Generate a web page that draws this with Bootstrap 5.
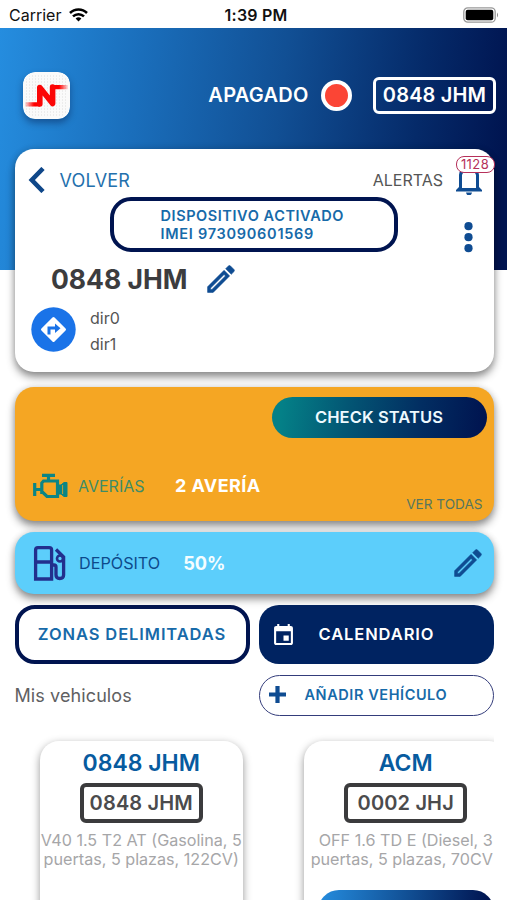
<!DOCTYPE html>
<html lang="es">
<head>
<meta charset="utf-8">
<meta name="viewport" content="width=device-width, initial-scale=1">
<title>Vehículo 0848 JHM</title>
<link href="https://cdn.jsdelivr.net/npm/bootstrap@5.3.0/dist/css/bootstrap.min.css" rel="stylesheet">
<style>
:root{--navy:#001450}
body{font-family:Inter,"Liberation Sans",sans-serif;width:507px;height:900px;overflow:hidden;background:#fff;line-height:1;color:#555}
svg{display:block;flex:none}
.t{white-space:nowrap;display:block}
.statusbar{height:28px;color:#111;font-size:16px;padding:2px 8px 0 9px}
.statusbar>div{flex:1 1 0}
.clock{letter-spacing:.2px;padding-left:4px}
.screen{height:872px;padding:0 13.5px 0 14.5px;background:linear-gradient(97deg,#258ddf 0,#1a6ebb 27%,#114f94 54%,#052a69 80%,#001450 97%) no-repeat 0 0/507px 242px}
.topbar{height:121px;padding:13px 0 0 8.5px;margin-right:-2.5px;color:#fff}
.applogo{width:47px;height:47px;box-shadow:0 4px 7px rgba(0,0,40,.35);border-radius:12px}
.power{font-size:20px;letter-spacing:.25px}
.led{width:31px;height:31px;border:4px solid #fff;background:#fb4535;border-radius:50%;margin-left:12.5px}
.plate{width:123px;height:37px;border:3px solid currentColor;border-radius:6px;font-size:20px;font-weight:600;letter-spacing:.15px}
.topbar .plate{margin-left:21px}
.shade{box-shadow:0 5px 8px rgba(0,0,0,.43),0 0 7px rgba(0,0,0,.13)}
.panel{border:0;border-radius:19px}
.device{height:222.5px}
.r1{height:48px;padding:14px 10.5px 0 13px}
.r2{height:55px}
.r3{height:54px;padding-left:36.5px}
.r4{height:46px;padding-left:16px}
.back{font-size:18px;color:#2470ad;margin-left:15px;letter-spacing:.2px;padding-top:1px}
.imei{width:288px;height:55px;border:4px solid var(--navy);border-radius:21px;color:#176aa9;font-size:14.5px;font-weight:600;line-height:17.5px;padding-left:46.5px;margin-left:95.5px;letter-spacing:.57px}
.dots{margin:25px 20.5px 0 auto}
.title{font-size:26.5px;color:#3c3c3e}
.dirs{font-size:16px;line-height:26.5px;margin-left:14.5px;padding-top:4px}
.alertcount{position:absolute;right:-11.5px;top:-9.5px;width:39px;height:17px;border:1.5px solid #b6305a;border-radius:8px;background:#fff;color:#b6305a;font-size:13px;line-height:14.5px;text-align:center;letter-spacing:.4px}
.faults{height:134px;margin-top:15.5px;background:#f5a623;padding:10px 7px 0 18.5px}
.check{width:215px;height:41px;border-radius:21px;background:linear-gradient(97deg,#048087 5%,#035674 35%,#022e62 68%,#001450 98%);color:#eefaff;font-size:16.5px;font-weight:600;letter-spacing:.1px}
.faultrow{margin-top:33.5px;height:28px}
.faultlabel{font-size:16px;color:#3d8c68;margin-left:10px}
.faultvalue{font-size:18px;margin-left:30.5px;letter-spacing:.4px}
.all{font-size:13.6px;color:#56765f;margin:-3px 4px 0 0;line-height:14px}
.tank{height:62px;margin-top:11px;background:#5ccefb;padding:0 12px 0 18.5px}
.tanklabel{font-size:16.2px;color:#0d4a8c;margin-left:13px;padding-top:1px}
.tankvalue{font-size:18.2px;color:#f4fdff;margin-left:23px;padding-top:1px}
.actions{margin-top:10.5px;gap:9px}
.bigbtn{width:235px;height:59.5px;border-radius:20px;font-weight:600;font-size:16.5px;letter-spacing:.9px}
.zones{border:4px solid var(--navy);color:#176aa9}
.cal{background:#002361;color:#fff;padding-left:15px}
.mine{height:42px;margin-top:10px}
.minelabel{font-size:18px;color:#606062;letter-spacing:.1px;padding-top:2px}
.add{width:235px;height:41px;border:1.5px solid #343d7b;border-radius:21px;color:#176aa9;font-weight:600;font-size:14.5px;padding-left:9px;letter-spacing:.57px}
.strip{margin:10px 0 0 -14.5px;padding:15px 0 0 39.5px;height:185px;overflow:hidden;gap:61px}
.vehicle{width:203.5px;height:220px;flex:none;border-radius:19px;text-align:center;box-shadow:0 3px 8px rgba(0,0,0,.42)}
.vname{color:#075b9f;font-size:23px;font-weight:600;line-height:24px;margin-top:10px}
.vehicle .plate{height:40px;border-width:4px;color:#3b3b3d;margin-top:7.5px}
.vehicle .plate .t{color:#4b4b4d;padding-top:1px}
.desc{color:#a6a6a8;font-size:16.15px;line-height:19px;margin-top:8px}
.go{width:176px;height:42px;border-radius:21px;background:linear-gradient(97deg,#258ddf,#114f94 50%,#001450 95%);margin-top:21.5px}
</style>
<script src="https://cdn.jsdelivr.net/npm/bootstrap@5.3.0/dist/js/bootstrap.bundle.min.js"></script>
</head>
<body>
<svg width="0" height="0" class="position-absolute"><defs>
<symbol id="pencil" viewBox="2.600 2.600 18.800 18.800"><path d="M14.060 9.020l.92.92L5.920 19H5v-.92l9.060-9.060M17.660 3c-.25 0-.51.1-.7.290l-1.830 1.830 3.750 3.750 1.830-1.830c.39-.39.39-1.020 0-1.410l-2.340-2.340c-.2-.2-.45-.29-.71-.29zm-3.600 3.190L3 17.250V21h3.750L17.810 9.940l-3.750-3.750z" stroke-width=".4"/></symbol>
</defs></svg>
<div class="statusbar d-flex align-items-center">
  <div class="d-flex align-items-center"><span class="t">Carrier</span>
    <svg class="ms-2" width="19" height="14" viewBox="0 0 19 14" fill="none" stroke="#000" stroke-width="2.5"><path d="M1 5A12 12 0 0 1 18 5M4 8.4a7.8 7.8 0 0 1 11 0"/><path d="M9.5 13.5 6.6 10.6a4.1 4.1 0 0 1 5.8 0z" fill="#000" stroke="none"/></svg></div>
  <span class="t fw-semibold clock">1:39 PM</span>
  <div class="d-flex justify-content-end"><svg width="36" height="16" viewBox="0 0 36 16"><rect x=".8" y=".8" width="31.4" height="14.4" rx="4" fill="#fff" stroke="#999" stroke-width="1.3"/><rect x="2.7" y="2.7" width="27.6" height="10.6" rx="2"/><path d="M34 5.5q2 2.5 0 5z" fill="#888"/></svg></div>
</div>
<main class="screen">
  <header class="topbar d-flex align-items-center">
    <svg class="applogo" viewBox="0 0 47 47"><defs><linearGradient id="fadein"><stop offset="0" stop-color="#f00" stop-opacity=".1"/><stop offset=".6" stop-color="#f00"/></linearGradient><linearGradient id="fadeout"><stop offset=".4" stop-color="#f00"/><stop offset="1" stop-color="#f00" stop-opacity=".1"/></linearGradient>
      <pattern id="dots" width="3" height="3" patternUnits="userSpaceOnUse"><path d="M0 0h1v2H0z" fill="#ececec"/></pattern></defs>
      <rect width="47" height="47" rx="12" fill="#fafafa"/><rect x="2" y="2" width="43" height="43" rx="10" fill="url(#dots)"/>
      <path d="M2 30.300h15v4.200H2z" fill="url(#fadein)"/><path d="M30 13h15v4.200H30z" fill="url(#fadeout)"/><path d="M16.800 32V15.500L29.600 31.500V15" fill="none" stroke="#fb0606" stroke-width="5.600" stroke-linejoin="round" stroke-linecap="round"/></svg>
    <span class="t fw-semibold ms-auto power">APAGADO</span>
    <span class="led"></span>
    <span class="plate d-flex align-items-center justify-content-center"><span class="t">0848 JHM</span></span>
  </header>

  <section class="card panel shade device">
    <div class="r1 d-flex align-items-center">
      <svg width="17" height="26" viewBox="0 0 17 26" fill="none" stroke="#0f4789" stroke-width="4.600"><path d="M15 1.500 3.800 13 15 24.500"/></svg>
      <span class="t back">VOLVER</span>
      <span class="t ms-auto" style="font-size:16px">ALERTAS</span>
      <span class="position-relative" style="margin-left:12px"><svg width="28" height="30" viewBox="0 0 28 30"><path d="M4 22V10Q4 3 14 3t10 7v12l3 3v1.500H1V25zM7 23h14V10Q20 6 14 6t-7 4z" fill="#0f4c92" fill-rule="evenodd"/><path d="M11 27.500h6q-.6 3-3 3t-3-3z" fill="#0f4c92"/></svg><span class="alertcount">1128</span></span>
    </div>
    <div class="r2 d-flex align-items-center">
      <div class="imei d-flex flex-column justify-content-center"><span class="t">DISPOSITIVO ACTIVADO</span><span class="t" style="letter-spacing:.73px">IMEI 973090601569</span></div>
      <svg class="dots" width="9" height="31" fill="#0f4c92"><circle cx="4.500" cy="4.200" r="4.100"/><circle cx="4.500" cy="15.200" r="4.100"/><circle cx="4.500" cy="26.200" r="4.100"/></svg>
    </div>
    <div class="r3 d-flex align-items-center">
      <span class="t fw-bold title">0848 JHM</span>
      <svg style="margin-left:19.500px" width="28" height="28" fill="#0f4c92" stroke="#0f4c92"><use href="#pencil"/></svg>
    </div>
    <div class="r4 d-flex align-items-center">
      <svg width="45" height="45" viewBox="0 0 45 45"><circle cx="22.500" cy="22.500" r="22.200" fill="#1a73e8"/><path d="m22.500 11.500 11 11-11 11-11-11z" fill="#fff" stroke="#fff" stroke-width="3" stroke-linejoin="round"/><path d="M18 27.500V21h7" fill="none" stroke="#1a73e8" stroke-width="3"/><path d="m24 16.500 5.500 4.700-5.500 4.700z" fill="#1a73e8"/></svg>
      <div class="d-flex flex-column dirs"><span class="t">dir0</span><span class="t">dir1</span></div>
    </div>
  </section>

  <section class="card panel shade faults">
    <div class="check d-flex align-items-center justify-content-center ms-auto"><span class="t">CHECK STATUS</span></div>
    <div class="d-flex align-items-center faultrow">
      <svg width="35" height="26" viewBox="0 0 35 26" fill="none" stroke="#0b8585" stroke-width="3.200"><path d="M9 2.300h13M15.500 2v5M10.500 8h14v15.500H14l-4-4H8.800V10zM1.700 10v13M2 16.500h6.500M25 16.500h3"/><path d="M25 12h3l3-2.500h3v14h-3L28 21h-3z" fill="#0b8585" stroke-width="1"/><path d="M29.600 12v9" stroke="#f5a623" stroke-width=".8"/></svg>
      <span class="t faultlabel">AVERÍAS</span>
      <span class="t fw-bold text-white faultvalue">2 AVERÍA</span>
    </div>
    <span class="t align-self-end all">VER TODAS</span>
  </section>

  <section class="card panel shade tank flex-row align-items-center">
    <svg width="33" height="35" viewBox="0 0 33 35" fill="none" stroke="#222f8d" stroke-width="3.300"><path d="M2.600 33V4q0-2.300 2.300-2.300h11.400q2.300 0 2.300 2.300v29zM2.600 16h16M18.500 19h2.500q2 0 2 2v8q0 3.500 3.800 3.500t3.800-3.500V11L23 3.500"/><circle cx="27" cy="12.500" r="3" stroke-width="2.600"/></svg>
    <span class="t tanklabel">DEPÓSITO</span>
    <span class="t fw-bold tankvalue">50%</span>
    <svg class="ms-auto" width="28" height="28" fill="#0f4c92" stroke="#0f4c92"><use href="#pencil"/></svg>
  </section>

  <div class="actions d-flex">
    <div class="bigbtn zones d-flex align-items-center justify-content-center"><span class="t">ZONAS DELIMITADAS</span></div>
    <div class="bigbtn cal d-flex align-items-center"><svg width="19" height="21" viewBox="3 1 18 20" fill="#fff"><path d="M17 12h-5v5h5v-5zM16 1v2H8V1H6v2H5c-1.110 0-1.990.9-1.990 2L3 19c0 1.100.890 2 2 2h14c1.100 0 2-.9 2-2V5c0-1.100-.9-2-2-2h-1V1h-2zm3 18H5V8h14v11z"/></svg><span class="t" style="margin-left:26px">CALENDARIO</span></div>
  </div>
  <div class="mine d-flex align-items-center justify-content-between">
    <span class="t minelabel">Mis vehiculos</span>
    <div class="add d-flex align-items-center"><svg width="17" height="19" viewBox="0 0 17 19" stroke="#0f4c92" stroke-width="4.200"><path d="M8.500 0v17M0 8.500h17"/></svg><span class="t" style="margin-left:19px">AÑADIR VEHÍCULO</span></div>
  </div>

  <div class="strip d-flex">
    <article class="card vehicle border-0 align-items-center">
      <div class="vname t">0848 JHM</div>
      <div class="plate d-flex align-items-center justify-content-center"><span class="t">0848 JHM</span></div>
      <div class="desc"><span class="t">V40 1.5 T2 AT (Gasolina, 5</span><span class="t">puertas, 5 plazas, 122CV)</span></div>
    </article>
    <article class="card vehicle border-0 align-items-center">
      <div class="vname t">ACM</div>
      <div class="plate d-flex align-items-center justify-content-center"><span class="t">0002 JHJ</span></div>
      <div class="desc"><span class="t">OFF 1.6 TD E (Diesel, 3</span><span class="t pe-2">puertas, 5 plazas, 70CV</span></div>
      <div class="go"></div>
    </article>
  </div>
</main>
</body>
</html>
